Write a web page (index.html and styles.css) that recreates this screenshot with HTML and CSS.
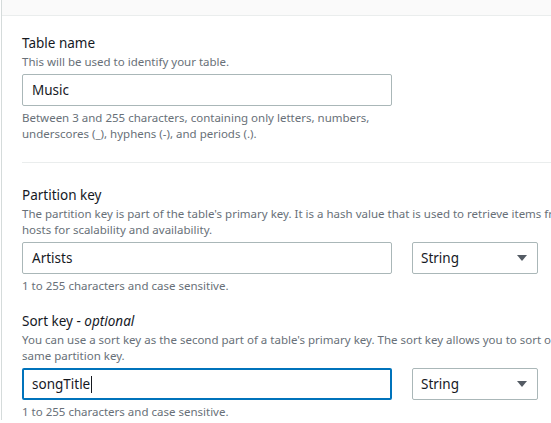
FILE: index.html
```html
<!DOCTYPE html>
<html lang="en">
<head>
<meta charset="utf-8">
<title>Create table</title>
<link rel="stylesheet" href="styles.css">
</head>
<body>
<div class="panel">
  <div class="panel-header"></div>
  <div class="panel-body">
    <section class="section section-name">
      <div class="field">
        <div class="label">Table name</div>
        <div class="desc">This will be used to identify your table.</div>
        <div class="row">
          <div class="input">Music</div>
        </div>
        <div class="hint hint-narrow">Between 3 and 255 characters, containing only letters, numbers, underscores (_), hyphens (-), and periods (.).</div>
      </div>
    </section>
    <section class="section section-keys">
      <div class="field">
        <div class="label">Partition key</div>
        <div class="desc">The partition key is part of the table's primary key. It is a hash value that is used to retrieve items from your table and allocate data across hosts for scalability and availability.</div>
        <div class="row">
          <div class="input">Artists</div>
          <div class="select">
            <span>String</span>
            <svg class="caret-down" width="10" height="6" viewBox="0 0 10 6"><polygon points="0,0 10,0 5,6" fill="#545b64"/></svg>
          </div>
        </div>
        <div class="hint">1 to 255 characters and case sensitive.</div>
      </div>
      <div class="field">
        <div class="label">Sort key - <i>optional</i></div>
        <div class="desc">You can use a sort key as the second part of a table's primary key. The sort key allows you to sort or search among all items sharing the same partition key.</div>
        <div class="row">
          <div class="input input-focused">songTitle<span class="text-caret"></span></div>
          <div class="select">
            <span>String</span>
            <svg class="caret-down" width="10" height="6" viewBox="0 0 10 6"><polygon points="0,0 10,0 5,6" fill="#545b64"/></svg>
          </div>
        </div>
        <div class="hint">1 to 255 characters and case sensitive.</div>
      </div>
    </section>
  </div>
</div>
</body>
</html>
```

FILE: styles.css
```css
html, body {
  margin: 0;
  padding: 0;
  overflow: hidden;
  background: #ffffff;
}

body {
  font-family: "Noto Sans", "Open Sans", sans-serif;
  color: #16191f;
}

.panel {
  margin-left: 1px;
  border-left: 1px solid #d5dbdb;
  width: 820px;
}

.panel-header {
  height: 15px;
  background: #fafafa;
  border-bottom: 1px solid #eaeded;
}

.section {
  margin-left: 20px;
}

.section-name {
  padding: 16px 0 20px;
  border-bottom: 1px solid #eaeded;
}

.section-keys {
  padding-top: 21px;
  display: flex;
  flex-direction: column;
  gap: 16px;
}

.label {
  font-size: 13.5px;
  line-height: 22px;
  color: #16191f;
}

.label i {
  font-style: italic;
}

.desc {
  font-size: 11.5px;
  line-height: 16px;
  color: #687078;
  width: 756px;
}

.row {
  display: flex;
  gap: 20px;
  margin-top: 4px;
}

.input,
.select {
  box-sizing: border-box;
  height: 32px;
  border: 1px solid #aab7b8;
  border-radius: 2px;
  display: flex;
  align-items: center;
  font-size: 13.5px;
  color: #16191f;
  background: #ffffff;
}

.input {
  width: 370px;
  padding: 0 9px;
}

.input-focused {
  border: 2px solid #0073bb;
  padding: 0 8px;
}

.text-caret {
  display: inline-block;
  width: 1px;
  height: 17px;
  background: #16191f;
  margin-left: 1px;
}

.select {
  width: 126px;
  padding: 0 10px 0 8px;
  justify-content: space-between;
}

.hint {
  margin-top: 4px;
  font-size: 11.5px;
  line-height: 16px;
  color: #687078;
}

.hint-narrow {
  width: 370px;
}
```
